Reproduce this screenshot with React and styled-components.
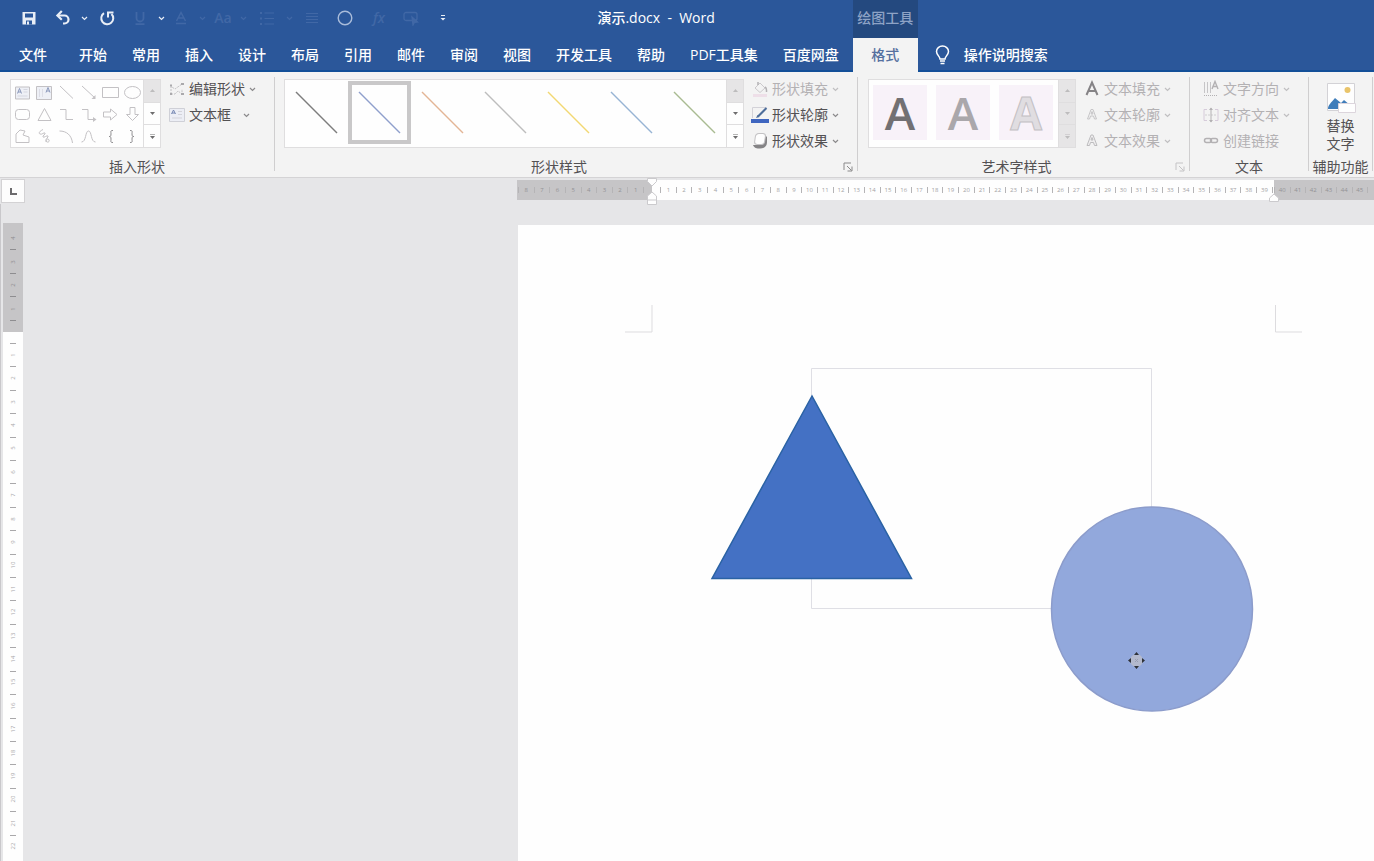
import React from 'react';
import styled, { createGlobalStyle, css } from 'styled-components';

const colors = {
    brand: '#2b579a',
    brandDark: '#24497f',
    brandLine: '#134f98',
    ribbon: '#f3f3f3',
    desk: '#e6e6e8',
    text: '#535153',
    muted: '#b3b1b3',
    line: '#dfdedf',
    ruler: '#c6c5c7',
};

const GlobalStyle = createGlobalStyle`
    * {
        box-sizing: border-box;
    }
    body {
        margin: 0;
        font-family: "Open Sans", "Noto Sans CJK SC", sans-serif;
        font-size: 14px;
        line-height: 18px;
        color: ${colors.text};
    }
    button {
        font: inherit;
        color: inherit;
        margin: 0;
        padding: 0;
        border: 0;
        background: none;
        white-space: nowrap;
    }
    svg {
        display: block;
        flex: none;
    }
`

const Window = styled.div`
    display: flex;
    flex-direction: column;
    height: 100vh;
    overflow: hidden;
    background: ${colors.desk};
`

/* ---------- header ---------- */

const Header = styled.header`
    display: grid;
    flex: none;
    grid-template-columns: auto 65px 1fr;
    grid-template-rows: 38px 34px;
    background: ${colors.brand};
    color: #fff;
`
const TitleBar = styled.div`
    display: flex;
    align-items: center;
    padding: 0 138px 2px 12px;
`
const QuickAccess = styled.div`
    display: flex;
    align-items: center;
`
const QuickButton = styled.button`
    display: flex;
    align-items: center;
    justify-content: center;
    width: ${({ $width }) => $width}px;
    height: 24px;
    color: ${({ $dim }) => ($dim ? '#4168a6' : '#e9eef6')};
    font-weight: 600;
`
const Title = styled.h1`
    margin: 0 0 0 auto;
    font-size: 14px;
    font-weight: 500;
    white-space: pre;
`
const ContextTitle = styled.div`
    display: flex;
    align-items: center;
    justify-content: center;
    padding-bottom: 2px;
    background: ${colors.brandDark};
    color: #8ea3c6;
    white-space: nowrap;
    font-weight: 500;
`
const Tabs = styled.nav`
    grid-row: 2;
    display: flex;
    gap: 1px;
    padding: 2px 2px 0 0;
    border-bottom: 2px solid ${colors.brandLine};
`
const Tab = styled.button`
    padding: 0 12px;
    font-weight: 500;
    ${({ $file }) => $file && css`
        padding: 0 19px;
    `};
    ${({ $active }) => $active && css`
        grid-row: 2;
        background: ${colors.ribbon};
        color: #56709f;
    `};
`
const TellMe = styled.div`
    grid-row: 2;
    grid-column: 3;
    display: flex;
    padding: 2px 0 0 17px;
    border-bottom: 2px solid ${colors.brandLine};
`
const TellMeButton = styled.button`
    display: flex;
    align-items: center;
    gap: 14px;
    font-weight: 500;
`

/* ---------- ribbon ---------- */

const RibbonBar = styled.section`
    display: flex;
    flex: none;
    background: ${colors.ribbon};
    border-bottom: 1px solid #d4d3d5;
`
const GroupBox = styled.div`
    display: flex;
    flex-direction: column;
    padding-top: 4px;
    padding-right: 1px;
    background: linear-gradient(#cfcecf, #cfcecf) right 5px / 1px calc(100% - 11px) no-repeat;
`
const GroupBody = styled.div`
    display: flex;
    gap: 7px;
    min-height: 78px;
    padding: 0 18px 0 ${({ $indent }) => $indent || 10}px;
`
const Caption = styled.div`
    display: flex;
    align-items: center;
    height: 20px;
    margin-top: 3px;
    span {
        flex: 1;
        text-align: center;
        white-space: nowrap;
    }
`
const Launcher = styled.button`
    width: 14px;
    color: ${({ $dim }) => ($dim ? '#c4c3c5' : '#8a898a')};
`
const Gallery = styled.div`
    display: flex;
    height: 69px;
    margin-top: 3px;
    background: #fefefe;
    border: 1px solid ${colors.line};
`
const ShapeGrid = styled.div`
    display: grid;
    grid-template-columns: repeat(6, 22px);
    grid-template-rows: repeat(3, 22px);
    padding-top: 1px;
`
const ShapeButton = styled.button`
    display: flex;
    align-items: center;
    justify-content: center;
    color: #c3c1c4;
`
const StyleButton = styled.button`
    display: flex;
    align-items: center;
    justify-content: center;
    width: 63px;
    height: 63px;
    margin-top: 1px;
    border: 4px solid ${({ $selected }) => ($selected ? '#c9c8c9' : 'transparent')};
`
const WordArtList = styled.div`
    display: flex;
    gap: 9px;
    padding: 5px 5px 0 4px;
`
const WordArt = styled.button`
    width: 54px;
    height: 55px;
    background: #f8f2f9;
    font-size: 46px;
    line-height: 55px;
    font-weight: 600;
    color: ${({ $color }) => $color};
    ${({ $outline }) => $outline && css`
        font-weight: 700;
        -webkit-text-stroke: 1px #c3c0c4;
    `};
`
const Scroller = styled.div`
    display: flex;
    flex-direction: column;
    width: 17px;
    border-left: 1px solid ${colors.line};
`
const ScrollButton = styled.button`
    display: flex;
    flex: 1;
    align-items: center;
    justify-content: center;
    background: ${({ $off }) => ($off ? '#e6e5e6' : 'transparent')};
    color: ${({ $off }) => ($off ? '#bdbcbd' : '#6e6d6e')};
    & + & {
        border-top: 1px solid ${colors.line};
    }
`
const Commands = styled.div`
    display: flex;
    flex-direction: column;
`
const Command = styled.button`
    display: flex;
    align-items: center;
    gap: 3px;
    height: 26px;
    color: ${({ $dim }) => ($dim ? colors.muted : colors.text)};
    > svg {
        color: ${({ $dim }) => ($dim ? '#c0bfc1' : '#8b8a8c')};
    }
`
const CommandIcon = styled.span`
    display: flex;
    align-items: center;
    justify-content: center;
    width: 18px;
    height: 18px;
`
const CommandLabel = styled.span`
    min-width: 50px;
    margin-right: 1px;
    text-align: left;
`
const AltText = styled.button`
    display: flex;
    flex-direction: column;
    align-items: center;
    width: 63px;
    min-height: 78px;
    padding-top: 7px;
    span {
        width: 32px;
        margin-top: 4px;
        white-space: normal;
    }
`

/* ---------- workspace ---------- */

const RulerRow = styled.div`
    display: flex;
    flex: none;
    height: 26px;
    padding: 1px 0 0 1px;
`
const TabStop = styled.button`
    display: flex;
    align-items: center;
    justify-content: center;
    width: 24px;
    height: 24px;
    background: #fdfdfd;
    border: 1px solid #d3d2d4;
`
const HRuler = styled.div`
    display: flex;
    flex: 1;
    min-width: 0;
    height: 20px;
    margin: 1px 0 0 492px;
`
const HZone = styled.div`
    position: relative;
    flex: ${({ $width }) => ($width ? `0 0 ${$width}px` : '1 1 0')};
    min-width: 0;
    padding: ${({ $pad }) => $pad || 0};
    background: ${({ $margin }) => ($margin ? colors.ruler : '#fefefe')};
    color: ${({ $margin }) => ($margin ? '#939295' : '#a3a2a4')};
`
const HScale = styled.div`
    display: flex;
    align-items: center;
    width: ${({ $width }) => ($width ? `${$width}px` : 'auto')};
    height: 20px;
    font-size: 6px;
    line-height: 6px;
    span {
        flex: 1 1 0;
        border-left: 1px solid #b5b4b6;
        text-align: center;
    }
    span:last-child {
        border-right: 1px solid #b5b4b6;
    }
`
const Marker = styled.svg`
    position: absolute;
    right: -6px;
    ${({ $top }) => ($top ? 'top: -3px' : 'bottom: -5px')};
    z-index: 1;
`
const Workspace = styled.main`
    display: flex;
    flex: 1;
    min-height: 0;
    border-left: 1px solid #c9c8cb;
`
const VRuler = styled.div`
    flex: none;
    width: 20px;
    margin: 19px 0 0 2px;
    overflow: hidden;
    background: #fefefe;
`
const VScale = styled.div`
    display: flex;
    flex-direction: column;
    height: ${({ $height }) => $height}px;
    padding: ${({ $pad }) => $pad};
    background: ${({ $margin }) => ($margin ? colors.ruler : 'transparent')};
    color: ${({ $margin }) => ($margin ? '#8e8d90' : '#a9a8aa')};
    font-size: 6px;
    line-height: 6px;
`
const VCell = styled.div`
    display: flex;
    flex: 1 1 0;
    align-items: center;
    justify-content: center;
    background: linear-gradient(currentColor, currentColor) center ${({ $end }) => ($end ? 'bottom' : 'top')} / 6px 1px no-repeat;
    span {
        transform: rotate(-90deg);
    }
`
const Canvas = styled.div`
    display: flex;
    flex: 1;
    min-width: 0;
    padding: 21px 0 0 495px;
`
const Page = styled.article`
    flex: 1;
    min-width: 0;
    overflow: hidden;
    background: #fefefe;
`

/* ---------- icons ---------- */

const Icon = ({ size = 16, width = 1, children }) => (
    <svg width={size} height={size} viewBox={`0 0 ${size} ${size}`} fill="none" stroke="currentColor" strokeWidth={width} aria-hidden="true">
        {children}
    </svg>
);

const Caret = () => (
    <svg width="7" height="5" viewBox="0 0 7 5" fill="none" stroke="currentColor" strokeWidth="1.2" aria-hidden="true">
        <path d="M1 1l2.500 2.500L6 1" />
    </svg>
);

const quickItems = [
    { name: '保存', width: 34, icon: <Icon><path d="M1.500 2h13v12.500h-13z" fill="currentColor" stroke="none" /><path d="M4 3.500h8v4H4zM5 10.500h6v4H5z" fill={colors.brand} stroke="none" /><path d="M6 11.500h2v3H6z" fill="currentColor" stroke="none" /></Icon> },
    { name: '撤消', width: 34, icon: <Icon width={2.2}><path d="M3 5.500h6.500a4 4 0 0 1 0 8H8" /><path d="M6.800 1L2.400 5.500l4.400 4.300" /></Icon> },
    { name: '撤消列表', width: 8, icon: <Caret /> },
    { name: '重复', width: 38, icon: <Icon width={2}><path d="M5 3.200a6 6 0 1 0 7.500.8" /><path d="M9 7.500V2.500h5.500" /></Icon> },
    { name: '下划线', width: 28, dim: true, icon: <Icon width={1.8}><path d="M4.500 2v6a3.500 3.500 0 0 0 7 0V2M3.500 14.200h9" /></Icon> },
    { name: '下划线列表', width: 14, icon: <Caret /> },
    { name: '字体颜色', width: 26, dim: true, icon: <Icon width={1.500}><path d="M3.500 11L8 2.500l4.500 8.500M5.500 8h5M3 13.500h10" /></Icon> },
    { name: '字体颜色列表', width: 16, dim: true, icon: <Caret /> },
    { name: '更改大小写', width: 26, dim: true, icon: 'Aa' },
    { name: '更改大小写列表', width: 14, dim: true, icon: <Caret /> },
    { name: '项目符号', width: 34, dim: true, icon: <Icon><path d="M5.500 3H15M5.500 8.500H15M5.500 14H15" /><path d="M1 3h2M1 8.500h2M1 14h2" strokeWidth="2" /></Icon> },
    { name: '项目符号列表', width: 10, dim: true, icon: <Caret /> },
    { name: '对齐', width: 36, dim: true, icon: <Icon size={14}><path d="M1 2.500h12M1 5.500h12M1 8.500h12M1 11.500h12" /></Icon> },
    { name: '椭圆', width: 30, icon: <Icon width={1.4}><circle cx="8" cy="8" r="6.800" stroke="#a9bcda" /></Icon> },
    { name: '公式', width: 38, dim: true, icon: <i>fx</i> },
    { name: '选择窗格', width: 26, dim: true, icon: <Icon width={1.300}><rect x="1" y="2.500" width="13" height="8" rx="2" /><path d="M9 7l5.500 5-3 .3-1.500 2.700z" fill="currentColor" /></Icon> },
    { name: '自定义快速访问工具栏', width: 38, icon: <Icon size={8}><path d="M2 1.500h4" /><path d="M1.500 4h5L4 6.500z" fill="currentColor" stroke="none" /></Icon> },
];

const shapes = [
    ['横排文本框', <><path d="M1.500 3h14v12h-14z" fill="#eef0f6" /><path d="M3.500 9.500l2-5 2 5M4 8h3" stroke="#8b98bb" /><path d="M9.500 5.500h4M9.500 8h4M3.500 12h10" stroke="#d5d6e0" /></>],
    ['竖排文本框', <><path d="M.5 2.500h15v13H.5z" fill="#eef0f6" /><path d="M10 8.500l2-5 2 5M10.500 7h3" stroke="#8b98bb" /><path d="M3.500 5v8M6.500 5v8" stroke="#dcdde6" /></>],
    ['直线', <path d="M2 2l13 12.500" />],
    ['箭头', <><path d="M2 2l13 12" /><path d="M15.500 11v4h-4z" fill="currentColor" stroke="none" /></>],
    ['矩形', <path d="M.5 3.500h16v10H.5z" />],
    ['椭圆', <ellipse cx="8.500" cy="8.500" rx="8" ry="6" />],
    ['圆角矩形', <rect x="1.500" y="3.500" width="14" height="10" rx="3" />],
    ['三角形', <path d="M8.500 2.500l6.500 12H2z" />],
    ['肘形连接符', <path d="M2 3.500h6v10h7" />],
    ['肘形箭头', <><path d="M2 3.500h6v10h6" /><path d="M13 11l3.500 2.500L13 16z" fill="currentColor" stroke="none" /></>],
    ['右箭头', <path d="M1.500 6h7V3l6.500 5.500L8.500 14v-3h-7z" />],
    ['下箭头', <path d="M6 1.500v7H2.500l6 6 6-6H11v-7z" />],
    ['任意多边形', <path d="M2 14.500V6l4-4 5 1-2 4 6 2v5.500z" />],
    ['自由曲线', <path d="M7 1.500C4 3 2 5 4 6s4-2 5-1-3 3-2 4 4-2 5-1-3 3-2 5 4 1 3-1-3-1-3 2" />],
    ['弧形', <path d="M1.500 3c7 0 12 4 13 12" />],
    ['曲线', <path d="M1.500 14c5 0 3.500-11 7-11s2 11 7 11" />],
    ['左大括号', <path d="M11 2.500c-3 0-2 1-2 3.500S8 8.500 7 8.500c1 0 2 0 2 2.500s-1 3.500 2 3.500" stroke="#8b8a8d" />],
    ['右大括号', <path d="M6 2.500c3 0 2 1 2 3.500s1 2.500 2 2.500c-1 0-2 0-2 2.500s1 3.500-2 3.500" stroke="#8b8a8d" />],
];

const lineStyles = ['#7d7d7d', '#8f9fcc', '#e3b596', '#bdbdbd', '#f2d873', '#97b4d4', '#a9bb92'];

const icons = {
    editShape: <Icon size={18}><path d="M3 14V6.500L7 9l7-5M3 14h4l3-3 4 3V9" strokeDasharray="2 1" stroke="#c3c2c4" /><path d="M2 5.500h2M2 14h2M13 4h3M13 14h3" stroke="#aaa9ac" strokeWidth="2" /></Icon>,
    textBox: <Icon size={18}><path d="M1.500 2.500h15v13h-15z" fill="#eceef5" stroke="#cfd0d7" /><path d="M3.500 8l2-4 2 4M4 7h3" stroke="#7486b2" /><path d="M10 5.500h4M10 8.500h4M4 12h10" stroke="#d3d3da" /></Icon>,
    fill: <Icon size={18}><path d="M4 8l5-5 5 5-5 4.500z" stroke="#cbc9cc" /><path d="M7 5V2M14 7c2 1 1.500 3 1.500 5" stroke="#b3b1b4" strokeWidth="1.500" /><path d="M2 14h14v3H2z" fill="#eedfe8" stroke="none" /></Icon>,
    outline: <Icon size={18}><path d="M1.500 12V1.500h14" stroke="#d3d2d8" /><path d="M7 10.500L15.500 2" stroke="#4d6d9a" strokeWidth="2" /><path d="M5 12l1.500-3L8.500 11z" fill="#4d6d9a" stroke="none" /><path d="M0 13h18v4H0z" fill="#3f66c0" stroke="none" /></Icon>,
    effects: <Icon size={18}><path d="M2 13c1 3 4 3.500 7 3.500 5 0 7-3 7-6.500V5l-3-3-1 8-2 3z" fill="#858486" stroke="none" /><rect x="4" y="1.500" width="10" height="11" rx="3" fill="#fefefe" stroke="#c3c2c4" transform="skewX(-8) translate(1 0)" /></Icon>,
    letterFill: <Icon size={18} width={2}><path d="M3.500 15L9 2.500 14.500 15M5.500 11h7" stroke="#858386" /></Icon>,
    letterOutline: <Icon size={18}><path d="M4.500 13L8 3.500h2L13.500 13h-2l-1-3h-3l-1 3zM8 8h2L9 5.500z" stroke="#c6c5c7" /></Icon>,
    letterEffects: <Icon size={18}><path d="M4 13.500L8 3h2l4 10.500h-2.500l-1-3h-3l-1 3zM8 8h2L9 5.500z" fill="#efeeef" stroke="#bdbcbe" /></Icon>,
    direction: <Icon size={18}><path d="M2.500 2v11M5.500 2v11M8.500 2v11" stroke="#c6c5c7" /><path d="M10 9l3-7.500L16 9M11 6.500h4" strokeWidth="1.400" /><path d="M2 15.500h14" strokeDasharray="1 1" /></Icon>,
    align: <Icon size={18}><path d="M5 3.500H2v11h3M13 3.500h3v11h-3" stroke="#d6cbda" /><path d="M3 9h12" strokeDasharray="2 1" stroke="#d0cfd1" /><path d="M9 2v14" /><path d="M7 4l2-2.500L11 4zM7 14l2 2.500 2-2.500z" fill="currentColor" stroke="none" /></Icon>,
    link: <Icon size={18} width={1.500}><rect x="2.500" y="6.500" width="7" height="4" rx="2" /><rect x="8.500" y="6.500" width="7" height="4" rx="2" /></Icon>,
};

const tabs = ['开始', '常用', '插入', '设计', '布局', '引用', '邮件', '审阅', '视图', '开发工具', '帮助', 'PDF工具集', '百度网盘'];

const range = (from, to) => Array.from({ length: Math.abs(to - from) + 1 }, (_, i) => (from < to ? from + i : from - i));

/* ---------- parts ---------- */

const GalleryScroller = ({ off }) => (
    <Scroller>
        <ScrollButton $off aria-label="上一行"><Icon size={7}><path d="M1 5h5L3.500 2z" fill="currentColor" stroke="none" /></Icon></ScrollButton>
        <ScrollButton $off={off} aria-label="下一行"><Icon size={7}><path d="M1 2h5L3.500 5z" fill="currentColor" stroke="none" /></Icon></ScrollButton>
        <ScrollButton $off={off} aria-label="其他"><Icon size={7}><path d="M1 1.500h5" strokeOpacity=".5" /><path d="M1 3h5L3.500 6z" fill="currentColor" stroke="none" /></Icon></ScrollButton>
    </Scroller>
);

const CommandList = ({ items }) => (
    <Commands>
        {items.map(({ icon, label, dim, plain }) => (
            <Command key={label} $dim={dim}>
                <CommandIcon>{icons[icon]}</CommandIcon>
                <CommandLabel>{label}</CommandLabel>
                {!plain && <Caret />}
            </Command>
        ))}
    </Commands>
);

const Group = ({ title, indent, launcher, launcherDim, children }) => (
    <GroupBox>
        <GroupBody $indent={indent}>{children}</GroupBody>
        <Caption>
            <span>{title}</span>
            {launcher && (
                <Launcher $dim={launcherDim} aria-label={`${title}选项`}>
                    <Icon size={10}><path d="M1 8V1h7M4 4l4.500 4.500M9 4.500V9H4.500" /></Icon>
                </Launcher>
            )}
        </Caption>
    </GroupBox>
);

const IndentTop = () => (
    <Marker $top width="12" height="10" viewBox="0 0 12 10">
        <path d="M1.500 1.500h9v3L6 9 1.500 4.500z" fill="#fefefe" stroke="#cbcacd" />
    </Marker>
);

const IndentBottom = ({ hanging }) => (
    <Marker width="12" height="14" viewBox="0 0 12 14">
        {hanging
            ? <path d="M1.500 13.500V5L6 1l4.500 4v8.500zM1.500 9h9" fill="#fefefe" stroke="#cbcacd" />
            : <path d="M1.500 10.500V7L6 3l4.500 4v3.500z" fill="#fefefe" stroke="#cbcacd" />}
    </Marker>
);

const Drawing = () => (
    <svg width="856" height="640" viewBox="0 0 856 640" fill="none" role="img" aria-label="三角形与圆形">
        <path d="M134 80v27H107M757.500 80v27H784" stroke="#dddcdf" />
        <path d="M293.500 143.500h340v240h-340z" stroke="#dfdfe5" />
        <path d="M294 171L194 353.500h199.500z" fill="#4471c4" stroke="#2a62a4" strokeWidth="1.500" />
        <ellipse cx="634" cy="384" rx="100.500" ry="102" fill="#92a8dc" stroke="#8c9ccb" strokeWidth="1.500" />
        <circle cx="618.500" cy="435.500" r="6.500" fill="#b3b9cd" />
        <path d="M618.500 427l2.500 3h-5zM618.500 444l2.500-3h-5zM610 435.500l3-2.500v5zM627 435.500l-3-2.500v5z" fill="#2f3238" />
        <path d="M617 434l3 3M620 434l-3 3" stroke="#9a9fb3" />
    </svg>
);

const App = () => {

    return (
        <Window>
            <GlobalStyle />
            <Header>
                <TitleBar>
                    <QuickAccess>
                        {quickItems.map(({ name, width, dim, icon }) => (
                            <QuickButton key={name} $width={width} $dim={dim} aria-label={name}>{icon}</QuickButton>
                        ))}
                    </QuickAccess>
                    <Title>演示.docx  -  Word</Title>
                </TitleBar>
                <ContextTitle>绘图工具</ContextTitle>
                <Tabs>
                    <Tab $file>文件</Tab>
                    {tabs.map(tab => <Tab key={tab}>{tab}</Tab>)}
                </Tabs>
                <Tab $active>格式</Tab>
                <TellMe>
                    <TellMeButton>
                        <svg width="15" height="20" viewBox="0 0 15 20" fill="none" stroke="#fff" strokeWidth="1.500" aria-hidden="true">
                            <path d="M5 14c0-2.500-3.500-4-3.500-7.500a6 5.500 0 0 1 12 0c0 3.500-3.500 5-3.500 7.500z" />
                            <path d="M5 16h5M5.500 18.500h4" />
                        </svg>
                        操作说明搜索
                    </TellMeButton>
                </TellMe>
            </Header>

            <RibbonBar>
                <Group title="插入形状">
                    <Gallery>
                        <ShapeGrid>
                            {shapes.map(([name, art]) => (
                                <ShapeButton key={name} aria-label={name}><Icon size={17}>{art}</Icon></ShapeButton>
                            ))}
                        </ShapeGrid>
                        <GalleryScroller />
                    </Gallery>
                    <CommandList
                        items={[
                            { icon: 'editShape', label: '编辑形状' },
                            { icon: 'textBox', label: '文本框' },
                        ]}
                    />
                </Group>
                <Group title="形状样式" indent={9} launcher>
                    <Gallery>
                        {lineStyles.map((color, i) => (
                            <StyleButton key={color} $selected={i === 1} aria-label={`线条样式 ${i + 1}`}>
                                <svg width="43" height="43" viewBox="0 0 43 43"><path d="M1 1l41 41" stroke={color} strokeWidth="1.500" /></svg>
                            </StyleButton>
                        ))}
                        <GalleryScroller />
                    </Gallery>
                    <CommandList
                        items={[
                            { icon: 'fill', label: '形状填充', dim: true },
                            { icon: 'outline', label: '形状轮廓' },
                            { icon: 'effects', label: '形状效果' },
                        ]}
                    />
                </Group>
                <Group title="艺术字样式" launcher launcherDim>
                    <Gallery>
                        <WordArtList>
                            <WordArt $color="#727073">A</WordArt>
                            <WordArt $color="#aaa7ab">A</WordArt>
                            <WordArt $color="#e0dde1" $outline>A</WordArt>
                        </WordArtList>
                        <GalleryScroller off />
                    </Gallery>
                    <CommandList
                        items={[
                            { icon: 'letterFill', label: '文本填充', dim: true },
                            { icon: 'letterOutline', label: '文本轮廓', dim: true },
                            { icon: 'letterEffects', label: '文本效果', dim: true },
                        ]}
                    />
                </Group>
                <Group title="文本" indent={12}>
                    <CommandList
                        items={[
                            { icon: 'direction', label: '文字方向', dim: true },
                            { icon: 'align', label: '对齐文本', dim: true },
                            { icon: 'link', label: '创建链接', dim: true, plain: true },
                        ]}
                    />
                </Group>
                <GroupBox>
                    <AltText>
                        <svg width="30" height="30" viewBox="0 0 30 30" aria-hidden="true">
                            <path d="M1.500.5h27v27h-27z" fill="#fefefe" stroke="#d3d2d6" />
                            <circle cx="21.500" cy="7" r="3" fill="#e9c46a" />
                            <path d="M2 26c0-4 3-6 7-11l6 5 3-3 6 5v4z" fill="#3f7dba" />
                            <path d="M12.500 20.500h17v9h-17z" fill="#fefefe" stroke="#dcd5dc" />
                        </svg>
                        <span>替换 文字</span>
                    </AltText>
                    <Caption><span>辅助功能</span></Caption>
                </GroupBox>
            </RibbonBar>

            <RulerRow>
                <TabStop aria-label="左对齐制表符"><Icon size={10} width={2}><path d="M3 2v6h6" stroke="#6c6b6d" /></Icon></TabStop>
                <HRuler>
                    <HZone $width={135} $margin $pad="0 8px 0 1px">
                        <HScale>{range(8, 1).map(n => <span key={n}>{n}</span>)}</HScale>
                        <IndentTop />
                        <IndentBottom hanging />
                    </HZone>
                    <HZone $width={622} $pad="0 1px 0 8px">
                        <HScale>{range(1, 39).map(n => <span key={n}>{n}</span>)}</HScale>
                        <IndentBottom />
                    </HZone>
                    <HZone $margin>
                        <HScale $width={94}>{range(40, 45).map(n => <span key={n}>{n}</span>)}</HScale>
                    </HZone>
                </HRuler>
            </RulerRow>

            <Workspace>
                <VRuler>
                    <VScale $height={109} $margin $pad="3px 0 11px">
                        {range(4, 1).map(n => <VCell key={n} $end><span>{n}</span></VCell>)}
                    </VScale>
                    <VScale $height={526} $pad="11px 0 0">
                        {range(1, 22).map(n => <VCell key={n}><span>{n}</span></VCell>)}
                    </VScale>
                </VRuler>
                <Canvas>
                    <Page><Drawing /></Page>
                </Canvas>
            </Workspace>
        </Window>
    );
}

export default App;
